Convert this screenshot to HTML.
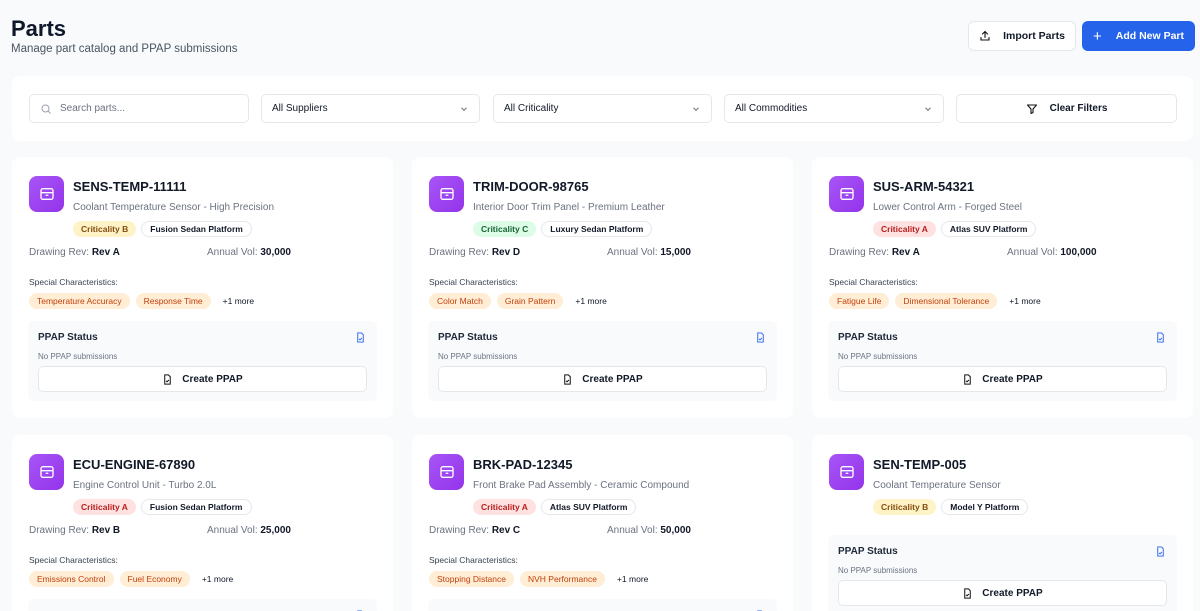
<!DOCTYPE html>
<html style="height:611px;overflow:hidden"><head><meta charset="utf-8"><style>
*{box-sizing:border-box;margin:0;padding:0}
body{width:1200px;height:611px;overflow:hidden;background:#f8fafc;font-family:"Liberation Sans",sans-serif;color:#111827;position:relative}
.abs{position:absolute}
h1{position:absolute;left:11px;top:16px;font-size:22px;font-weight:700;color:#0f172a}
.sub{left:11px;top:43px;font-size:11.5px;color:#4b5563}
.btn{position:absolute;top:21px;height:30px;border-radius:6px;font-size:10.5px;font-weight:700;display:flex;align-items:center;justify-content:center;gap:12px}
.filters{left:12px;top:76px;width:1181px;height:65px;background:#fff;border-radius:8px}
.inp{position:absolute;top:18px;height:29px;border:1px solid #e5e7eb;border-radius:5px;font-size:10px;display:flex;align-items:center;padding-left:10px}
.chev{position:absolute;right:10px;top:9px}
.card{position:absolute;width:381px;height:261px;background:#fff;border-radius:8px}
.ic{position:absolute;left:17px;top:19px;width:35px;height:36px;border-radius:8px;background:linear-gradient(135deg,#a855f7,#9333ea);display:flex;align-items:center;justify-content:center}
.t{position:absolute;left:61px;top:22px;font-size:13px;font-weight:600}
.d{position:absolute;left:61px;top:45px;font-size:10px;color:#6b7280}
.bd{position:absolute;left:61px;top:64px;display:flex;gap:5px}
.b{height:16px;border-radius:8px;font-size:8.5px;font-weight:600;padding:0 8px;line-height:16px}
.by{background:#fef3c7;color:#854d0e}.bg{background:#dcfce7;color:#166534}.br{background:#fee2e2;color:#b91c1c}
.bw{border:1px solid #e5e7eb;line-height:14px;color:#111827}
.rv{position:absolute;left:17px;top:90px;font-size:10px;color:#6b7280}
.vl{position:absolute;left:195px;top:90px;font-size:10px;color:#6b7280}
.rv b,.vl b{color:#111827}
.sc{position:absolute;left:17px;top:120px;font-size:8.5px;color:#374151}
.tg{position:absolute;left:17px;top:136px;display:flex;gap:6px;align-items:center}
.o{background:#ffedd5;color:#c2410c;height:16px;line-height:16px;border-radius:8px;padding:0 8px;font-size:8.5px}
.m{font-size:8.5px;color:#111827;margin-left:6px}
.pp{position:absolute;left:16px;top:164px;width:349px;height:80px;background:#f8fafc;border-radius:6px}
.pt{position:absolute;left:10px;top:11px;font-size:10px;color:#1f2937;font-weight:600}
.pn{position:absolute;left:10px;top:31px;font-size:8px;color:#6b7280}
.pi{position:absolute;right:11px;top:11px}
.pb{position:absolute;left:10px;top:45px;width:329px;height:26px;background:#fff;border:1px solid #e5e7eb;border-radius:5px;display:flex;align-items:center;justify-content:center;gap:9px;font-size:10px;font-weight:600}
</style></head><body>
<h1>Parts</h1>
<div class="abs sub">Manage part catalog and PPAP submissions</div>
<div class="btn" style="left:968px;width:108px;background:#fff;border:1px solid #e5e7eb;color:#111827"><svg width="12" height="12" viewBox="0 0 24 24" fill="none" stroke="#111" stroke-width="2.2" stroke-linecap="round"><path d="M12 15V3M7 8l5-5 5 5M4 15v5h16v-5"/></svg>Import Parts</div>
<div class="btn" style="left:1082px;width:113px;background:#2563eb;color:#fff;gap:14px"><span style="font-size:15px;font-weight:400">+</span>Add New Part</div>
<div class="abs filters">
<div class="inp" style="left:17px;width:220px;color:#6b7280"><svg width="12" height="12" viewBox="0 0 24 24" fill="none" stroke="#9ca3af" stroke-width="2"><circle cx="11" cy="11" r="7"/><path d="M16 16l5 5"/></svg><span style="margin-left:8px">Search parts...</span></div>
<div class="inp" style="left:249px;width:219px">All Suppliers<svg class="chev" width="10" height="10" viewBox="0 0 24 24" fill="none" stroke="#6b7280" stroke-width="2.5"><path d="M6 9l6 6 6-6"/></svg></div>
<div class="inp" style="left:481px;width:219px">All Criticality<svg class="chev" width="10" height="10" viewBox="0 0 24 24" fill="none" stroke="#6b7280" stroke-width="2.5"><path d="M6 9l6 6 6-6"/></svg></div>
<div class="inp" style="left:712px;width:220px">All Commodities<svg class="chev" width="10" height="10" viewBox="0 0 24 24" fill="none" stroke="#6b7280" stroke-width="2.5"><path d="M6 9l6 6 6-6"/></svg></div>
<div class="inp" style="left:944px;width:221px;justify-content:center;padding:0;gap:12px;font-weight:600"><svg width="12" height="12" viewBox="0 0 24 24" fill="none" stroke="#111" stroke-width="2.2" stroke-linejoin="round"><path d="M3 4h18l-7 8v7l-4 2v-9z"/></svg>Clear Filters</div>
</div>

<div class="card" style="left:12px;top:157px">
<div class="ic"><svg width="16" height="16" viewBox="0 0 24 24" fill="none" stroke="#fff" stroke-width="2"><rect x="3" y="4" width="18" height="16" rx="3"/><path d="M3 10h18M10 14h4"/></svg></div>
<div class="t">SENS-TEMP-11111</div><div class="d">Coolant Temperature Sensor - High Precision</div>
<div class="bd"><span class="b by">Criticality B</span><span class="b bw">Fusion Sedan Platform</span></div>
<div class="rv">Drawing Rev: <b>Rev A</b></div><div class="vl">Annual Vol: <b>30,000</b></div>
<div class="sc">Special Characteristics:</div>
<div class="tg"><span class="o">Temperature Accuracy</span><span class="o">Response Time</span><span class="m">+1 more</span></div>
<div class="pp"><div class="pt">PPAP Status</div><svg class="pi" width="11" height="11" viewBox="0 0 24 24" fill="none" stroke="#2563eb" stroke-width="2"><path d="M14 2H6v20h12V6z"/><path d="M9 15l2 2 4-4"/></svg><div class="pn">No PPAP submissions</div><div class="pb"><svg width="11" height="11" viewBox="0 0 24 24" fill="none" stroke="#111" stroke-width="2.2"><path d="M14 2H6v20h12V6z"/><path d="M9 15l2 2 4-4"/></svg>Create PPAP</div></div>
</div>

<div class="card" style="left:412px;top:157px">
<div class="ic"><svg width="16" height="16" viewBox="0 0 24 24" fill="none" stroke="#fff" stroke-width="2"><rect x="3" y="4" width="18" height="16" rx="3"/><path d="M3 10h18M10 14h4"/></svg></div>
<div class="t">TRIM-DOOR-98765</div><div class="d">Interior Door Trim Panel - Premium Leather</div>
<div class="bd"><span class="b bg">Criticality C</span><span class="b bw">Luxury Sedan Platform</span></div>
<div class="rv">Drawing Rev: <b>Rev D</b></div><div class="vl">Annual Vol: <b>15,000</b></div>
<div class="sc">Special Characteristics:</div>
<div class="tg"><span class="o">Color Match</span><span class="o">Grain Pattern</span><span class="m">+1 more</span></div>
<div class="pp"><div class="pt">PPAP Status</div><svg class="pi" width="11" height="11" viewBox="0 0 24 24" fill="none" stroke="#2563eb" stroke-width="2"><path d="M14 2H6v20h12V6z"/><path d="M9 15l2 2 4-4"/></svg><div class="pn">No PPAP submissions</div><div class="pb"><svg width="11" height="11" viewBox="0 0 24 24" fill="none" stroke="#111" stroke-width="2.2"><path d="M14 2H6v20h12V6z"/><path d="M9 15l2 2 4-4"/></svg>Create PPAP</div></div>
</div>

<div class="card" style="left:812px;top:157px">
<div class="ic"><svg width="16" height="16" viewBox="0 0 24 24" fill="none" stroke="#fff" stroke-width="2"><rect x="3" y="4" width="18" height="16" rx="3"/><path d="M3 10h18M10 14h4"/></svg></div>
<div class="t">SUS-ARM-54321</div><div class="d">Lower Control Arm - Forged Steel</div>
<div class="bd"><span class="b br">Criticality A</span><span class="b bw">Atlas SUV Platform</span></div>
<div class="rv">Drawing Rev: <b>Rev A</b></div><div class="vl">Annual Vol: <b>100,000</b></div>
<div class="sc">Special Characteristics:</div>
<div class="tg"><span class="o">Fatigue Life</span><span class="o">Dimensional Tolerance</span><span class="m">+1 more</span></div>
<div class="pp"><div class="pt">PPAP Status</div><svg class="pi" width="11" height="11" viewBox="0 0 24 24" fill="none" stroke="#2563eb" stroke-width="2"><path d="M14 2H6v20h12V6z"/><path d="M9 15l2 2 4-4"/></svg><div class="pn">No PPAP submissions</div><div class="pb"><svg width="11" height="11" viewBox="0 0 24 24" fill="none" stroke="#111" stroke-width="2.2"><path d="M14 2H6v20h12V6z"/><path d="M9 15l2 2 4-4"/></svg>Create PPAP</div></div>
</div>

<div class="card" style="left:12px;top:435px">
<div class="ic"><svg width="16" height="16" viewBox="0 0 24 24" fill="none" stroke="#fff" stroke-width="2"><rect x="3" y="4" width="18" height="16" rx="3"/><path d="M3 10h18M10 14h4"/></svg></div>
<div class="t">ECU-ENGINE-67890</div><div class="d">Engine Control Unit - Turbo 2.0L</div>
<div class="bd"><span class="b br">Criticality A</span><span class="b bw">Fusion Sedan Platform</span></div>
<div class="rv">Drawing Rev: <b>Rev B</b></div><div class="vl">Annual Vol: <b>25,000</b></div>
<div class="sc">Special Characteristics:</div>
<div class="tg"><span class="o">Emissions Control</span><span class="o">Fuel Economy</span><span class="m">+1 more</span></div>
<div class="pp"><div class="pt">PPAP Status</div><svg class="pi" width="11" height="11" viewBox="0 0 24 24" fill="none" stroke="#2563eb" stroke-width="2"><path d="M14 2H6v20h12V6z"/><path d="M9 15l2 2 4-4"/></svg></div>
</div>

<div class="card" style="left:412px;top:435px">
<div class="ic"><svg width="16" height="16" viewBox="0 0 24 24" fill="none" stroke="#fff" stroke-width="2"><rect x="3" y="4" width="18" height="16" rx="3"/><path d="M3 10h18M10 14h4"/></svg></div>
<div class="t">BRK-PAD-12345</div><div class="d">Front Brake Pad Assembly - Ceramic Compound</div>
<div class="bd"><span class="b br">Criticality A</span><span class="b bw">Atlas SUV Platform</span></div>
<div class="rv">Drawing Rev: <b>Rev C</b></div><div class="vl">Annual Vol: <b>50,000</b></div>
<div class="sc">Special Characteristics:</div>
<div class="tg"><span class="o">Stopping Distance</span><span class="o">NVH Performance</span><span class="m">+1 more</span></div>
<div class="pp"><div class="pt">PPAP Status</div><svg class="pi" width="11" height="11" viewBox="0 0 24 24" fill="none" stroke="#2563eb" stroke-width="2"><path d="M14 2H6v20h12V6z"/><path d="M9 15l2 2 4-4"/></svg></div>
</div>

<div class="card" style="left:812px;top:435px">
<div class="ic"><svg width="16" height="16" viewBox="0 0 24 24" fill="none" stroke="#fff" stroke-width="2"><rect x="3" y="4" width="18" height="16" rx="3"/><path d="M3 10h18M10 14h4"/></svg></div>
<div class="t">SEN-TEMP-005</div><div class="d">Coolant Temperature Sensor</div>
<div class="bd"><span class="b by">Criticality B</span><span class="b bw">Model Y Platform</span></div>
<div class="pp" style="top:100px"><div class="pt">PPAP Status</div><svg class="pi" width="11" height="11" viewBox="0 0 24 24" fill="none" stroke="#2563eb" stroke-width="2"><path d="M14 2H6v20h12V6z"/><path d="M9 15l2 2 4-4"/></svg><div class="pn">No PPAP submissions</div><div class="pb"><svg width="11" height="11" viewBox="0 0 24 24" fill="none" stroke="#111" stroke-width="2.2"><path d="M14 2H6v20h12V6z"/><path d="M9 15l2 2 4-4"/></svg>Create PPAP</div></div>
</div>
</body></html>
